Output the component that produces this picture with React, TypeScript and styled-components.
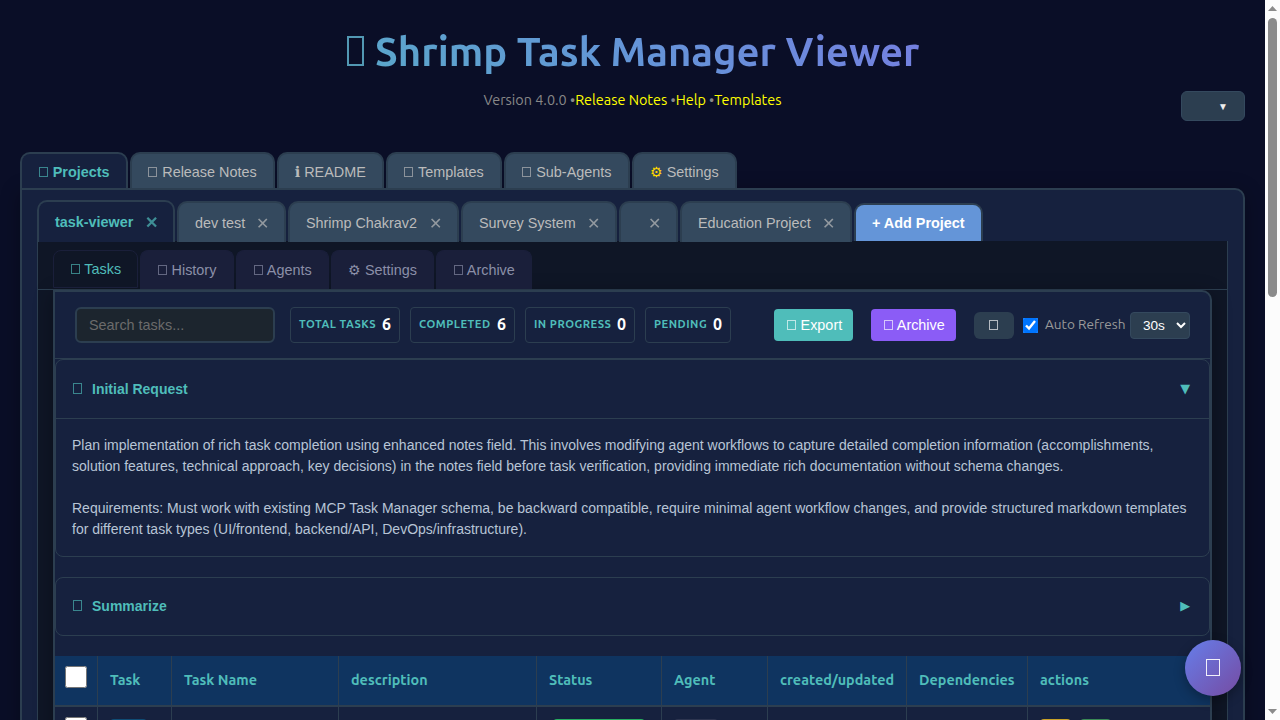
import React from "react";
import styled, { createGlobalStyle, css } from "styled-components";

const ui = `Ubuntu, "Noto Sans", "Open Sans", sans-serif`;
const sans = `"Liberation Sans", Arial, sans-serif`;
const c = {
  page: "#0a0e27",
  panel: "#16213e",
  line: "#2c3e50",
  tab: "#34495e",
  accent: "#4fbdba",
  dark: "#0f1626",
  head: "#0f3460",
};

const GlobalStyle = createGlobalStyle`
  * { box-sizing: border-box; }
  html, body { margin: 0; padding: 0; overflow: hidden; background: ${c.page}; }
  body { font-family: ${ui}; color: #fff; }
  button, input, select { font-family: ${sans}; }
`;

const Screen = styled.div`
  display: flex;
  width: 1280px;
  height: 720px;
  overflow: hidden;
  position: relative;
`;
const Page = styled.div`
  width: 1265px;
  height: 720px;
  padding: 0 20px;
  overflow: hidden;
  background: ${c.page};
`;
const Header = styled.header`
  height: 152px;
  padding-top: 26px;
  position: relative;
  text-align: center;
`;
const Title = styled.h1`
  margin: 0;
  font-size: 40px;
  line-height: 52px;
  font-weight: 600;
  white-space: nowrap;
  color: transparent;
  background: linear-gradient(45deg, #4fbdba, #6495d8, #8767e9);
  background-clip: text;
  -webkit-background-clip: text;
`;
const Version = styled.div`
  margin-top: 11px;
  font-size: 14.4px;
  line-height: 22px;
  color: #888;
  white-space: nowrap;
  a { color: #ff0; }
`;
const LangButton = styled.button`
  position: absolute;
  right: 0;
  top: 91.4px;
  width: 64px;
  height: 29.6px;
  padding: 0 0 0 20px;
  border: 1px solid #34495e;
  border-radius: 6px;
  background: ${c.line};
  color: #eee;
  font-size: 10px;
`;

/* Hollow rectangle standing in for an emoji glyph. */
const Box = styled.i`
  display: inline-block;
  width: 9px;
  height: 10px;
  margin: 0 0.9px 0 0.7px;
  border: 1px solid currentColor;
  vertical-align: 0;
  opacity: 0.65;
`;
const TitleBox = styled(Box)`
  width: 17px;
  height: 30px;
  margin: 0 2px 0 1px;
  border: 2px solid #5fb0cc;
  opacity: 0.85;
`;
const CardBox = styled(Box)`
  height: 11px;
`;
const FabBox = styled(Box)`
  display: block;
  width: 14px;
  height: 17px;
  margin: 0 auto 1px;
  opacity: 0.9;
`;

const Tabs = styled.nav`
  display: flex;
  gap: 2px;
  align-items: flex-end;
`;
const tabBase = css<{ $w: number }>`
  display: flex;
  align-items: center;
  flex: none;
  width: ${(p) => p.$w}px;
  border: 2px solid ${c.line};
  border-bottom: 0;
  border-radius: 10px 10px 0 0;
  padding: 0 0 0 16px;
  font-family: ${sans};
  font-size: 14.4px;
  line-height: 17px;
  white-space: pre;
`;
const MainTab = styled.button<{ $w: number; $active?: boolean }>`
  ${tabBase}
  height: 36px;
  padding-top: 2px;
  padding-left: ${(p) => (p.$active ? 16.2 : 15.7)}px;
  background: ${(p) => (p.$active ? c.panel : c.tab)};
  color: ${(p) => (p.$active ? c.accent : "#bbb")};
  font-weight: ${(p) => (p.$active ? 700 : 400)};
`;
const Gear = styled.span`
  color: #ffd700;
`;
const Info = styled.span`
  font-family: "DejaVu Sans", sans-serif;
`;
const MainPanel = styled.main`
  height: 700px;
  padding: 10px 15px 0;
  border: 2px solid ${c.line};
  border-radius: 0 10px 0 0;
  background: ${c.panel};
  box-shadow: 0 4px 20px rgba(0, 0, 0, 0.3);
`;
const ProjectTabs = styled(Tabs)`
  height: 42px;
  margin-bottom: -1px;
  position: relative;
`;
const ProjectTab = styled.button<{ $w: number; $active?: boolean }>`
  ${tabBase}
  height: ${(p) => (p.$active ? 42 : 41)}px;
  padding-top: ${(p) => (p.$active ? 0 : 2)}px;
  padding-left: ${(p) => (p.$active ? 16 : 15.9)}px;
  background: ${(p) => (p.$active ? c.panel : c.tab)};
  color: ${(p) => (p.$active ? c.accent : "#bbb")};
  font-weight: ${(p) => (p.$active ? 700 : 400)};
`;
const Close = styled.span`
  margin-left: auto;
  padding-right: 15.5px;
  font-size: 16px;
  opacity: 0.7;
`;
const AddProject = styled.button`
  ${tabBase}
  height: 38px;
  margin-bottom: 1px;
  background: #6495d8;
  color: #fff;
  font-weight: 700;
`;
const ProjectArea = styled.section`
  height: 600px;
  border: solid ${c.line};
  border-width: 0 1px;
  background: ${c.dark};
`;
const InnerTabs = styled(Tabs)`
  height: 49px;
  padding: 9px 0 0 15px;
  align-items: flex-start;
  border-bottom: 1px solid ${c.line};
`;
const InnerTab = styled.button<{ $w: number; $active?: boolean }>`
  flex: none;
  width: ${(p) => p.$w}px;
  height: ${(p) => (p.$active ? 38 : 39)}px;
  padding: 0 0 0 16px;
  border: 1px solid #1a1f3a;
  border-bottom-width: ${(p) => (p.$active ? 1 : 0)}px;
  border-radius: 8px 8px 0 0;
  background: ${(p) => (p.$active ? c.dark : "#1a1f3a")};
  color: ${(p) => (p.$active ? c.accent : "#8b8fa8")};
  font-size: 14.4px;
  line-height: 17px;
  text-align: left;
  white-space: pre;
`;
const Content = styled.div`
  margin: 0 15px;
  height: 500px;
  border: 2px solid ${c.line};
  border-radius: 0 10px 0 0;
  background: ${c.panel};
  box-shadow: 0 4px 20px rgba(0, 0, 0, 0.3);
`;
const Toolbar = styled.div`
  display: flex;
  align-items: center;
  height: 67px;
  padding: 0 20px;
  border-bottom: 1px solid ${c.line};
`;
const Search = styled.input`
  width: 200px;
  height: 36px;
  padding: 0 12px;
  border: 2px solid ${c.line};
  border-radius: 6px;
  background: #1c252e;
  font-size: 14.4px;
  &::placeholder { color: #6b6b6b; }
`;
const Stats = styled.div`
  display: flex;
  gap: 10px;
  margin-left: 15px;
`;
const Stat = styled.div<{ $w: number }>`
  display: flex;
  align-items: center;
  justify-content: space-between;
  width: ${(p) => p.$w}px;
  height: 36px;
  padding: 0 8px 2px;
  border: 1px solid ${c.line};
  border-radius: 4px;
  white-space: nowrap;
  span {
    color: ${c.accent};
    font-size: 11.2px;
    font-weight: 600;
    letter-spacing: 0.5px;
  }
  b { font-size: 16px; font-weight: 700; }
`;
const Action = styled.button<{ $w: number; $bg: string; $gap: number }>`
  width: ${(p) => p.$w}px;
  height: 32px;
  margin-left: ${(p) => p.$gap}px;
  padding: 0 0 0 12px;
  border: 0;
  border-radius: 4px;
  background: ${(p) => p.$bg};
  color: #fff;
  font-size: 14.4px;
  text-align: left;
  white-space: pre;
`;
const Refresh = styled.button`
  width: 40px;
  height: 27px;
  margin-left: 18px;
  padding: 0 1px 0 0;
  border: 0;
  border-radius: 6px;
  background: ${c.line};
  color: #fff;
  font-size: 14px;
`;
const AutoBox = styled.span`
  display: flex;
  width: 15px;
  height: 15px;
  margin: 0 7px 0 9px;
  background: #0075ff;
`;
const AutoCheck = styled.input`
  width: 15px;
  height: 15px;
  margin: 0;
`;
const AutoLabel = styled.label`
  width: 85px;
  padding-bottom: 2px;
  font-size: 13.6px;
  color: #999;
  white-space: nowrap;
`;
const Interval = styled.select`
  width: 60px;
  height: 27px;
  padding: 0 0 0 8px;
  border: 1px solid #34495e;
  border-radius: 4px;
  background: ${c.line};
  color: #fff;
  font-size: 13.6px;
`;
const Card = styled.section`
  margin-bottom: 20px;
  border: 1px solid ${c.line};
  border-radius: 8px;
  font-family: ${sans};
`;
const CardHead = styled.div<{ $closed?: boolean }>`
  display: flex;
  align-items: center;
  height: 57px;
  padding: 0 19px ${(p) => (p.$closed ? 1 : 0)}px 16px;
  color: ${c.accent};
  font-size: 14px;
  font-weight: 700;
  line-height: 16px;
  white-space: pre;
`;
const CardIcon = styled.span`
  width: 20px;
  font-weight: 400;
`;
const Arrow = styled.span`
  margin-left: auto;
  font-family: "DejaVu Sans", sans-serif;
  font-size: 12.8px;
  font-weight: 400;
`;
const CardBody = styled.div`
  height: 138px;
  margin-top: 1px;
  padding: 16px 16px 0;
  border-top: 1px solid ${c.line};
  color: #b8c5d6;
  font-size: 14px;
  line-height: 21px;
  white-space: pre;
`;
const Row = styled.div<{ $head?: boolean }>`
  display: grid;
  grid-template-columns: 43px 74px 167px 198px 125px 106px 139px 121px 182px;
  height: 51px;
  background: ${(p) => (p.$head ? c.head : c.panel)};
  border-bottom: 2px solid ${c.line};
`;
const Cell = styled.div<{ $head?: boolean }>`
  display: flex;
  gap: 9px;
  align-items: ${(p) => (p.$head ? "center" : "flex-start")};
  padding: ${(p) => (p.$head ? "0 0 1px 12px" : "12px 0 0 12px")};
  border-right: 1px solid ${c.line};
  color: ${c.accent};
  font-size: 14.4px;
  font-weight: 600;
  white-space: nowrap;
  &:first-child { padding: 10px 0 0 10px; align-items: flex-start; }
  &:last-child { border-right: 0; }
`;
const Check = styled.input`
  width: 22px;
  height: 22px;
  margin: 0;
`;
const Pill = styled.i<{ $w: number; $bg: string; $ml?: number }>`
  width: ${(p) => p.$w}px;
  height: 24px;
  margin-left: ${(p) => p.$ml ?? 0}px;
  border-radius: 4px;
  background: ${(p) => p.$bg};
`;
const Fab = styled.button`
  position: absolute;
  left: 1185px;
  top: 640px;
  width: 56px;
  height: 56px;
  padding: 0;
  border: 0;
  border-radius: 50%;
  background: linear-gradient(135deg, #667eea, #764ba2);
  box-shadow: 0 4px 12px rgba(0, 0, 0, 0.3);
  color: #fff;
`;
const Scroll = styled.div`
  display: flex;
  flex-direction: column;
  align-items: center;
  width: 15px;
  height: 720px;
  padding: 6px 0;
  background: #fcfcfc;
`;
const Thumb = styled.div`
  width: 9px;
  height: 279px;
  margin: 7px 0 auto;
  border-radius: 5px;
  background: #8b8b8b;
`;

const mainTabs: [string, number][] = [
  ["Projects", 108],
  ["Release Notes", 145],
  ["README", 107],
  ["Templates", 116],
  ["Sub-Agents", 126],
  ["Settings", 105],
];
const projects: [string, number][] = [
  ["task-viewer", 138],
  ["dev test", 109],
  ["Shrimp Chakrav2", 171],
  ["Survey System", 156],
  ["", 59],
  ["Education Project", 172],
];
const innerTabs: [string, number][] = [
  ["Tasks", 85],
  ["History", 94],
  ["Agents", 93],
  ["Settings", 103],
  ["Archive", 96],
];
const stats: [string, number, number][] = [
  ["TOTAL TASKS", 6, 110],
  ["COMPLETED", 6, 105],
  ["IN PROGRESS", 0, 110],
  ["PENDING", 0, 86],
];
const columns = ["Task", "Task Name", "description", "Status", "Agent", "created/updated", "Dependencies", "actions"];

const requestText = `Plan implementation of rich task completion using enhanced notes field. This involves modifying agent workflows to capture detailed completion information (accomplishments,
solution features, technical approach, key decisions) in the notes field before task verification, providing immediate rich documentation without schema changes.

Requirements: Must work with existing MCP Task Manager schema, be backward compatible, require minimal agent workflow changes, and provide structured markdown templates
for different task types (UI/frontend, backend/API, DevOps/infrastructure).`;

function MainIcon({ label }: { label: string }) {
  if (label === "Settings") return <Gear>⚙</Gear>;
  if (label === "README") return <Info>ℹ</Info>;
  return <Box />;
}

export default function App() {
  return (
    <Screen>
      <GlobalStyle />
      <Page>
        <Header>
          <Title><TitleBox /> Shrimp Task Manager Viewer</Title>
          <Version>
            Version 4.0.0 •<a>Release Notes</a> •<a>Help</a> •<a>Templates</a>
          </Version>
          <LangButton>▼</LangButton>
        </Header>
        <Tabs>
          {mainTabs.map(([label, w], i) => (
            <MainTab key={label} $w={w} $active={i === 0}>
              <span><MainIcon label={label} /> {label}</span>
            </MainTab>
          ))}
        </Tabs>
        <MainPanel>
          <ProjectTabs>
            {projects.map(([label, w], i) => (
              <ProjectTab key={i} $w={w} $active={i === 0}>
                {label}
                <Close>✕</Close>
              </ProjectTab>
            ))}
            <AddProject $w={129}>+ Add Project</AddProject>
          </ProjectTabs>
          <ProjectArea>
            <InnerTabs>
              {innerTabs.map(([label, w], i) => (
                <InnerTab key={label} $w={w} $active={i === 0}>
                  {label === "Settings" ? "⚙" : <Box />} {label}
                </InnerTab>
              ))}
            </InnerTabs>
            <Content>
              <Toolbar>
                <Search placeholder="Search tasks..." />
                <Stats>
                  {stats.map(([label, n, w]) => (
                    <Stat key={label} $w={w}>
                      <span>{label}</span>
                      <b>{n}</b>
                    </Stat>
                  ))}
                </Stats>
                <Action $w={79} $gap={43} $bg={c.accent}><Box /> Export</Action>
                <Action $w={85} $gap={18} $bg="#8b5cf6"><Box /> Archive</Action>
                <Refresh><Box /></Refresh>
                <AutoBox><AutoCheck type="checkbox" defaultChecked /></AutoBox>
                <AutoLabel>Auto Refresh</AutoLabel>
                <Interval><option>30s</option></Interval>
              </Toolbar>
              <Card>
                <CardHead>
                  <CardIcon><CardBox /></CardIcon>Initial Request<Arrow>▼</Arrow>
                </CardHead>
                <CardBody>{requestText}</CardBody>
              </Card>
              <Card>
                <CardHead $closed>
                  <CardIcon><CardBox /></CardIcon>Summarize<Arrow>▶</Arrow>
                </CardHead>
              </Card>
              <Row $head>
                <Cell $head><Check type="checkbox" /></Cell>
                {columns.map((name) => <Cell $head key={name}>{name}</Cell>)}
              </Row>
              <Row>
                <Cell><Check type="checkbox" /></Cell>
                <Cell><Pill $w={37} $bg="#0f4c75" /></Cell>
                <Cell />
                <Cell />
                <Cell><Pill $w={92} $bg="#27ae60" $ml={4} /></Cell>
                <Cell><Pill $w={44} $bg="#2d3550" /></Cell>
                <Cell />
                <Cell />
                <Cell>
                  <Pill $w={31} $bg="#c9a227" />
                  <Pill $w={31} $bg="#3a8a55" />
                </Cell>
              </Row>
            </Content>
          </ProjectArea>
        </MainPanel>
      </Page>
      <Scroll>
        <svg width="9" height="5"><path d="M0 5L4.5 0L9 5Z" fill="#8b8b8b" /></svg>
        <Thumb />
        <svg width="9" height="5"><path d="M0 0L4.5 5L9 0Z" fill="#8b8b8b" /></svg>
      </Scroll>
      <Fab><FabBox /></Fab>
    </Screen>
  );
}
